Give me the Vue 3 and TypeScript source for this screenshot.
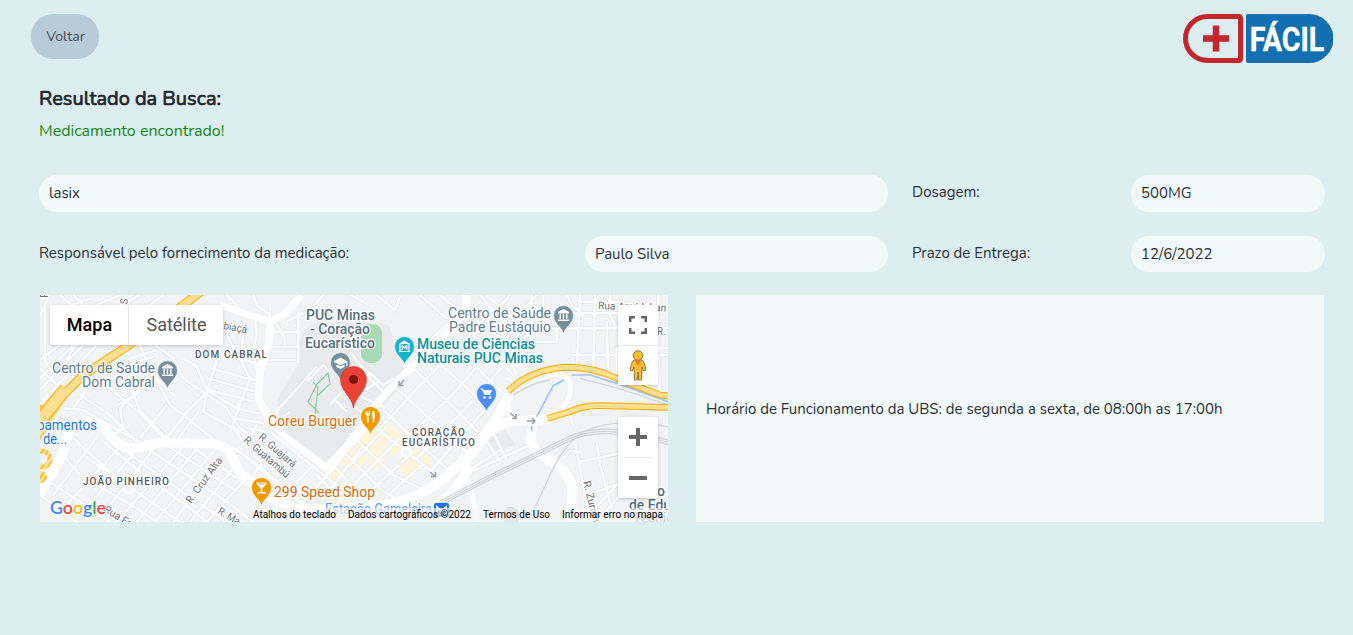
<script setup lang="ts">
interface MapLabel {
  t: string
  x: number
  y: number
  w: number
  kind: string
  rot?: number
}

interface Pin {
  x: number
  y: number
  color: string
  icon: string
}

const labels: MapLabel[] = [
  { t: 'F', x: 48, y: 298, w: 6, kind: 'street', rot: -90 },
  { t: 'S', x: 127, y: 305, w: 6, kind: 'street', rot: -80 },
  { t: 'biaçá', x: 223, y: 329, w: 24, kind: 'street', rot: 10 },
  { t: 'DOM CABRAL', x: 195, y: 358, w: 72, kind: 'area' },
  { t: 'JOÃO PINHEIRO', x: 83, y: 485, w: 86, kind: 'area' },
  { t: 'CORAÇÃO', x: 412, y: 436, w: 53, kind: 'area' },
  { t: 'EUCARÍSTICO', x: 402, y: 446, w: 73, kind: 'area' },
  { t: 'Centro de Saúde', x: 52, y: 373, w: 103, kind: 'slate' },
  { t: 'Dom Cabral', x: 82, y: 387, w: 73, kind: 'slate' },
  { t: 'Centro de Saúde', x: 448, y: 318, w: 103, kind: 'slate' },
  { t: 'Padre Eustáquio', x: 449, y: 332, w: 102, kind: 'slate' },
  { t: 'PUC Minas', x: 306, y: 320, w: 69, kind: 'slate strong' },
  { t: '- Coração', x: 310, y: 334, w: 60, kind: 'slate strong' },
  { t: 'Eucarístico', x: 305, y: 348, w: 70, kind: 'slate strong' },
  { t: 'Museu de Ciências', x: 417, y: 349, w: 118, kind: 'teal strong' },
  { t: 'Naturais PUC Minas', x: 417, y: 363, w: 126, kind: 'teal strong' },
  { t: 'Coreu Burguer', x: 268, y: 426, w: 89, kind: 'orange' },
  { t: '299 Speed Shop', x: 274, y: 497, w: 101, kind: 'orange' },
  { t: 'pamentos', x: 37, y: 430, w: 60, kind: 'blue' },
  { t: 'de...', x: 43, y: 444, w: 24, kind: 'blue' },
  { t: 'R. Cruz Alta', x: 191, y: 504, w: 54, kind: 'street', rot: -54 },
  { t: 'R. Guajará', x: 258, y: 438, w: 46, kind: 'street', rot: 41 },
  { t: 'R. Guatambú', x: 243, y: 441, w: 57, kind: 'street', rot: 41 },
  { t: 'Rua Fr', x: 103, y: 511, w: 30, kind: 'street', rot: 32 },
  { t: 'R. Ma', x: 217, y: 513, w: 24, kind: 'street', rot: 31 },
  { t: 'R. Zurich', x: 583, y: 482, w: 42, kind: 'street', rot: 76 },
  { t: 'Rua Aquidaban', x: 598, y: 309, w: 68, kind: 'street', rot: 2 },
  { t: 'R. H', x: 657, y: 335, w: 18, kind: 'street' },
  { t: 'Estação Gameleira', x: 325, y: 514, w: 107, kind: 'station' },
  { t: 'o', x: 657, y: 496, w: 8, kind: 'slate strong' },
  { t: 'de Edu', x: 629, y: 510, w: 42, kind: 'slate strong' },
  { t: 'Técnico', x: 633, y: 523, w: 48, kind: 'slate strong faint' },
]

const slate = '#78909c'
const pins: Pin[] = [
  { x: 167.5, y: 389, color: slate, icon: 'bank' },
  { x: 563.5, y: 334, color: slate, icon: 'bank' },
  { x: 340.5, y: 381, color: slate, icon: 'school' },
  { x: 404.5, y: 365, color: '#12b5cb', icon: 'museum' },
  { x: 486.5, y: 412, color: '#4c8df6', icon: 'cart' },
  { x: 370.5, y: 435, color: '#f29900', icon: 'food' },
  { x: 261.5, y: 506, color: '#f29900', icon: 'drink' },
]

/* Streets are drawn in two tiles, in thirds of a pixel. */
const westStreets = [
  'M0 60L30 0M15 40V200L45 245M0 285L130 150M0 250L110 140M0 195L60 150M0 325L170 150M60 230L105 150M60 0L95 30L150 10',
  'M100 0L130 30M170 30L240 0M240 30L300 0M330 30L370 0M0 220L70 290',
  'M300 150L320 200L390 330L430 360L510 285M345 150L400 190L430 250L560 340L600 400L640 430',
  'M430 190L470 215L500 285L590 340L600 315M270 190L350 165M245 218L340 185M225 235L310 210L345 240',
  'M150 270L100 340M75 340L130 345L260 420L300 440M120 300L210 360L290 440M300 280L240 340L250 400L210 425',
  'M190 265L290 345L380 440M270 275L300 345L370 420L420 450M380 330L300 430M440 355L370 440M475 350L405 445',
  'M430 360L530 440M490 350L580 400L610 440M345 240L300 290L235 330M310 210L400 300',
  'M490 150L530 200L500 290L490 350M550 90L575 150L600 190L630 250L570 410M612 80L605 170L660 185M645 60L650 120L640 160L650 230',
  'M515 220L620 250L650 255M505 250L645 290M500 283L640 320M570 180L660 210M560 150L605 155M590 340L655 355M580 370L670 385',
  'M575 390L620 430L600 470M650 390L625 435L590 462M620 400L690 410L850 540L930 600L990 650',
  'M560 445L640 500L760 600L840 660M600 470L740 590L800 640M820 510L730 600M780 480L700 580M720 430L640 540M870 530L790 620M920 560L850 640',
  'M40 600L175 420M70 640L235 460M130 650L290 465M190 655L350 450M230 681L430 455M290 681L480 450M345 681L520 470M400 681L545 490M450 681L580 520M500 681L610 560',
  'M60 470L120 540L290 640L350 681M130 480L260 570L420 681M190 440L300 530L450 640L500 681M260 470L440 600L560 681M320 460L560 620L640 681M380 450L590 590M450 450L590 550M0 600L110 681M30 560L210 681M100 430L220 540',
  'M695 112H780M695 155H775M690 195H760M775 50V205M705 80L735 130V150M740 80L775 60M850 0L805 50L770 60M690 30V70M640 0L650 30L690 60M560 0L590 30',
]
const eastStreets = [
  'M80 0L135 45L150 5M175 130L225 150L300 80M210 0L290 70L330 60M0 0L40 20M270 0L340 60',
  'M-40 240L0 290L110 340M30 210L100 270L130 250M0 170L60 250L110 300M45 285L85 260',
  'M60 385L170 470L265 545M100 345L180 420L300 530M140 280L310 435L370 490M190 220L330 355L390 420M240 180L420 340M290 130L455 290M330 80L490 240',
  'M0 415L130 540L230 590M-30 460L100 590L140 610M-60 500L30 600M-100 540L-20 620',
  'M90 400L230 250L330 150L430 40M160 440L310 295L440 150L520 50M200 490L370 315L480 190M240 530L400 350M0 510L110 395M20 560L160 420M60 590L190 470M110 605L220 505M-100 640L40 450M-50 640L20 560M310 520L350 450',
  'M390 0L440 60L510 110M480 0L430 60L370 120M560 0L480 90M350 40L400 100L460 130M410 0L500 80M510 110L470 170L500 240',
  'M545 0V80L535 190L545 210M580 0V50L605 70M620 100V145M650 0L665 30L700 60M690 0L680 225M735 0L730 225M770 80L775 230M780 0V60L800 100',
  'M530 100H810M525 140H620M665 180H960M640 55H820M685 20H810M925 0V160L930 300M800 230V160H960M900 100H960',
  'M470 250L490 260L500 290L560 255L600 245M655 350L670 390M580 340L660 360',
  'M676 450L690 520L720 681M740 440L750 510L790 660M640 490L660 468L690 470M690 500L810 475M700 605L810 565M735 640L810 560M810 600L740 681M640 681L670 560',
  'M340 560L365 530L540 450M405 430L450 500M430 415L470 495M335 540L375 515L450 465',
]

const westBlocks = 'M905 505L930 460L985 490L950 530ZM860 555L875 515L915 530L885 565ZM930 450L980 405L1010 430L970 475Z'
const eastBlocks = 'M15 450L55 395L115 430L90 485L55 460L30 480ZM55 500L75 460L110 490L75 525ZM100 375L155 415L130 445L85 395ZM180 460L245 490L235 520L180 488ZM150 510L185 490L215 520L190 545L140 525ZM105 455L130 440L155 465L130 485Z'

const rails = [0, 7, 14]
const credits = [
  { t: 'Atalhos do teclado', x: 253, w: 83 },
  { t: 'Dados cartográficos ©2022', x: 348, w: 123 },
  { t: 'Termos de Uso', x: 483, w: 67 },
  { t: 'Informar erro no mapa', x: 562, w: 101 },
]
const spin = (l: MapLabel) => (l.rot ? `rotate(${l.rot} ${l.x} ${l.y})` : undefined)
const fit = (l: MapLabel) => (l.kind === 'area' ? 'spacing' : 'spacingAndGlyphs')
</script>

<template>
  <div class="page">
    <header class="top">
      <button class="back" type="button">Voltar</button>
      <svg class="logo" width="150" height="49" viewBox="0 0 150 49" role="img" aria-label="+ Fácil">
        <path d="M24.500 2.500H56a1.500 1.500 0 0 1 1.500 1.500V45a1.500 1.500 0 0 1-1.500 1.500H24.500a22 22 0 0 1 0-44Z" fill="none" stroke="#c4262e" stroke-width="5" />
        <path d="M20 24.500H46M33 11.500V37.500" stroke="#c4262e" stroke-width="6.500" />
        <path d="M65 0H126a24.500 24.500 0 0 1 0 49H65a2 2 0 0 1-2-2V2a2 2 0 0 1 2-2Z" fill="#1270b0" />
        <text x="66.700" y="37" textLength="74.500" lengthAdjust="spacingAndGlyphs" class="logo-word">FÁCIL</text>
      </svg>
    </header>

    <main class="content">
      <h1 class="title">Resultado da Busca:</h1>
      <p class="found">Medicamento encontrado!</p>

      <div class="row first">
        <div class="field">lasix</div>
        <span class="label">Dosagem:</span>
        <div class="field">500MG</div>
      </div>
      <div class="row second">
        <span class="label">Responsável pelo fornecimento da medicação:</span>
        <div class="field">Paulo Silva</div>
        <span class="label">Prazo de Entrega:</span>
        <div class="field">12/6/2022</div>
      </div>

      <div class="panels">
        <section class="map">
          <svg class="canvas" width="628" height="227" viewBox="40 295 628 227">
            <defs>
              <pattern id="hatch" width="4.500" height="5" patternUnits="userSpaceOnUse" patternTransform="rotate(35)"><path d="M0 0H5V5H0Z" fill="#fde293" /><path d="M1 0V5" stroke="#f9ab00" stroke-width="1.200" /></pattern>
            </defs>
            <path d="M40 295H668V522H40Z" fill="#f1f3f4" />
            <path d="M300 342Q306 322 322 322H345L385 324Q392 326 393 340L408 380L326 463L276 425Q282 416 277 401Q288 380 297 367Z" fill="#e8eaed" />
            <path d="M487 438L505 430L516 445L497 452Z" fill="#e8eaed" />
            <g transform="translate(40 295) scale(0.33333)"><path :d="westBlocks" fill="#fef5d8" /></g>
            <g transform="translate(350 295) scale(0.33333)"><path :d="eastBlocks" fill="#fef5d8" /></g>

            <g class="edges" transform="translate(40 295) scale(0.33333)"><path v-for="d in westStreets" :key="d" :d="d" /></g>
            <g class="edges" transform="translate(350 295) scale(0.33333)"><path v-for="d in eastStreets" :key="d" :d="d" /></g>
            <g class="roads" transform="translate(40 295) scale(0.33333)">
              <path v-for="d in westStreets" :key="d" :d="d" />
              <path d="M540 30L640 65L690 78L730 60L785 0" class="w20" />
              <path d="M692 78L688 140L660 230L655 310L690 375L740 430L860 518L990 380" class="w22" />
              <path d="M-5 600L40 530L70 470L85 410Q110 370 150 378Q190 390 215 425Q245 470 300 457L350 443L520 445Q560 455 570 475L600 535L680 600L760 640L980 645" class="w26" />
              <path d="M700 360L830 215M800 260L850 210L880 240L850 300M870 330L910 285L950 340L990 375M880 310L920 350M690 395L750 350" class="thin" />
              <circle cx="268" cy="580" r="14" fill="#f1f3f4" />
            </g>
            <g class="roads" transform="translate(350 295) scale(0.33333)">
              <path v-for="d in eastStreets" :key="d" :d="d" />
              <path d="M-70 535L30 400L60 350L130 270L325 75Q350 50 350 -10" class="w22" />
              <path d="M-20 640L80 632Q200 615 270 560L360 480L430 385L478 300" class="w26" />
              <path d="M240 650L300 600L345 540L350 490L385 450Q430 382 500 378L600 372" class="w26" />
              <path d="M472 295Q465 360 520 385" class="w14" />
              <path d="M550 385L540 435L560 470L640 525L665 565V690" class="w26" />
              <path d="M590 240Q650 230 660 265Q668 310 630 345L560 380" class="w14" />
              <path d="M340 520Q370 600 385 690" class="w14" />
              <circle cx="168" cy="472" r="13" fill="#f1f3f4" />
            </g>

            <g transform="translate(350 295) scale(0.33333)" fill="none">
              <g stroke="#d3d6d9" stroke-width="4">
                <path v-for="r in rails" :key="r" :transform="`translate(0 ${r})`" d="M270 618L420 540L640 433Q700 400 770 402Q850 405 954 435" />
                <path d="M490 300Q540 265 600 255M690 250Q800 275 954 330" />
                <path d="M545 660L600 540Q640 450 700 410Q800 365 954 395" />
              </g>
              <path d="M545 408V392M560 365L610 272L642 255M665 240H720L800 265L960 322" stroke="#a1c2fa" stroke-width="5" />
            </g>
            <rect x="361" y="324" width="21" height="39" rx="9" fill="#a8dab5" />
            <path d="M328 373L317 384L308 402L319 413M313 382L318 388L315 415M328 373L330 384L317 396" fill="none" stroke="#81c995" stroke-width="1.100" />
            <path d="M40 405H62L40 440Z" fill="url(#hatch)" />
            <circle cx="42" cy="459" r="8" fill="none" stroke="url(#hatch)" stroke-width="5" />
            <circle cx="41" cy="477" r="6" fill="url(#hatch)" />
            <g transform="translate(40 295) scale(0.33333)" class="highway big">
              <path d="M490 -15L260 155L130 240L75 295L-10 400M72 278L20 340L-15 390" class="rim" />
              <path d="M490 -15L260 155L130 240L75 295L-10 400M72 278L20 340L-15 390" class="core" />
            </g>
            <g transform="translate(350 295) scale(0.33333)" class="highway">
              <path d="M475 288Q540 225 640 217Q720 213 800 250L930 300L970 304M592 370L660 350Q700 330 760 332L970 338" class="rim" />
              <path d="M475 288Q540 225 640 217Q720 213 800 250L930 300L970 304M592 370L660 350Q700 330 760 332L970 338" class="core" />
            </g>
            <g fill="none" stroke="#9aa0a6" stroke-width="1.500">
              <path d="M404 380L399.500 385M399 381V385.500H403.500" /><path d="M430 472L435 476M435.500 472V476.500H431" />
              <path d="M527 421H535M532 418L535 421L532 424" /><path d="M510 413L516 418M516 414V418.500H512" />
            </g>
            <circle cx="511" cy="516" r="9" fill="#c4c9cd" />
            <rect x="434" y="503" width="15" height="14" rx="2" fill="#1a73e8" />
            <path d="M437 513V507L441.500 511L446 507V513" fill="none" stroke="#fff" stroke-width="1.800" />
            <text v-for="(l, i) in labels" :key="`l${i}`" :x="l.x" :y="l.y" :textLength="l.w" :transform="spin(l)" :lengthAdjust="fit(l)" class="tag" :class="l.kind">{{ l.t }}</text>

            <g v-for="(p, i) in pins" :key="`p${i}`" :transform="`translate(${p.x} ${p.y})`">
              <path d="M0 0C-1.500-7-10-10-10-18.500a10 10 0 0 1 20 0C10-10 1.500-7 0 0Z" :fill="p.color" stroke="#fff" stroke-width="0.700" />
              <g v-if="p.icon === 'bank'" fill="#fff">
                <path d="M-5.500-20.500V-22L0-25L5.500-22V-20.500ZM-5.500-14.500H5.500V-13H-5.500ZM-4-20H-2.500V-15H-4ZM-.700-20H.700V-15H-.700ZM2.500-20H4V-15H2.500Z" />
              </g>
              <g v-else-if="p.icon === 'museum'" fill="none" stroke="#fff">
                <path d="M-5.800-21L0-24.500L5.800-21Z" fill="#fff" stroke="none" /><path d="M-4.500-21V-14M4.500-21V-14M-5.500-13.500H5.500" stroke-width="1.200" /><path d="M-2.300-15V-19.500L0-17L2.300-19.500V-15" stroke-width="1.200" />
              </g>
              <path v-else-if="p.icon === 'school'" d="M-7-19.500L0-23.500L7-19.500V-15H5.800V-18.500L0-15.500ZM-4-16.500L0-14.500L4-16.500V-14L0-12L-4-14Z" fill="#fff" />
              <g v-else-if="p.icon === 'cart'" fill="#fff">
                <path d="M-6-23H-4L-1.500-17.500H4" fill="none" stroke="#fff" stroke-width="1.200" /><path d="M-4-22H6L3.500-18H-2Z" /><circle cx="-2" cy="-14.500" r="1.200" /><circle cx="3.500" cy="-14.500" r="1.200" />
              </g>
              <g v-else-if="p.icon === 'food'" fill="none" stroke="#fff">
                <path d="M-4.500-24V-20M-2.700-24V-20M-.900-24V-20" stroke-width="1" /><path d="M-5-20.500H-.400M-2.700-20V-12.500M3-24V-12.500" stroke-width="1.700" /><path d="M2-24Q5-22 4-17H2Z" fill="#fff" stroke="none" />
              </g>
              <path v-else d="M-5-23.500H5V-22L.800-17.500V-14H4V-12.500H-4V-14H-.800V-17.500L-5-22ZM-2.500-21.500H2.500L3.500-22.500H-3.500Z" fill="#fff" fill-rule="evenodd" />
            </g>

            <path d="M353.500 408C352 397 340.500 391 340.500 379.500a13 13 0 0 1 26 0C366.500 391 355 397 353.500 408Z" fill="#ea4335" stroke="#c5362b" stroke-width="0.600" />
            <circle cx="353.500" cy="379.500" r="4.600" fill="#811411" />

            <text x="50" y="514" textLength="56" lengthAdjust="spacingAndGlyphs" class="google"><tspan fill="#4285f4">G</tspan><tspan fill="#ea4335">o</tspan><tspan fill="#fbbc04">o</tspan><tspan fill="#4285f4">g</tspan><tspan fill="#34a853">l</tspan><tspan fill="#ea4335">e</tspan></text>
            <path d="M249 508H668V522H249Z" fill="#f5f5f5" fill-opacity="0.650" />
            <text v-for="c in credits" :key="c.t" :x="c.x" y="518" :textLength="c.w" lengthAdjust="spacingAndGlyphs" class="credit">{{ c.t }}</text>
          </svg>

          <div class="types">
            <button type="button" class="type active">Mapa</button>
            <button type="button" class="type">Satélite</button>
          </div>
          <div class="tools">
            <button type="button" class="tool" aria-label="Tela cheia">
              <svg width="18" height="18" viewBox="0 0 18 18"><path d="M1.250 6V1.250H6M12 1.250H16.750V6M16.750 12V16.750H12M6 16.750H1.250V12" fill="none" stroke="#666" stroke-width="2.500" /></svg>
            </button>
            <button type="button" class="tool person" aria-label="Street View">
              <svg width="18" height="31" viewBox="0 0 18 31"><g fill="#fbbc2d" stroke="#7d7048" stroke-width="0.900"><path d="M5 10H13Q15 10.500 17 20L14.700 21L13 17L12.500 30H9.700L9 22L8.300 30H5.500L5 17L3.300 21L1 20Q3 10.500 5 10Z" /><circle cx="9" cy="5.500" r="4.800" /></g><path d="M5.500 10.300H12.500L9 16Z" fill="#e8792f" /></svg>
            </button>
          </div>
          <div class="zoomer">
            <button type="button" class="tool" aria-label="Aumentar zoom"><svg width="18" height="18"><path d="M0 9H18M9 0V18" stroke="#666" stroke-width="4" /></svg></button>
            <i class="rule"></i>
            <button type="button" class="tool" aria-label="Diminuir zoom"><svg width="18" height="18"><path d="M0 9H18" stroke="#666" stroke-width="4" /></svg></button>
          </div>
        </section>

        <section class="hours">Horário de Funcionamento da UBS: de segunda a sexta, de 08:00h as 17:00h</section>
      </div>
    </main>
  </div>
</template>

<style>
body {
  background: #ddeef1;
}
</style>

<style scoped>
.page {
  box-sizing: border-box;
  min-height: 635px;
  padding: 14px 20px 0 31px;
  background: #ddeef1;
  color: #2b3035;
  font: 15px/22px Nunito, Lato, sans-serif;
}
.top {
  display: flex;
  justify-content: space-between;
  height: 49px;
}
.back {
  width: 68px;
  height: 45px;
  padding: 0 0 0 1px;
  border: 0;
  border-radius: 22px;
  background: #b8cbd9;
  color: #454b50;
  font: 14.2px/22px Nunito, Lato, sans-serif;
}
.logo {
  display: block;
}
.logo-word {
  fill: #fff;
  stroke: #fff;
  stroke-width: 0.4px;
  font: 700 33px Roboto, sans-serif;
}
.content {
  padding: 24px 8px 0;
}
.title {
  margin: 0;
  color: #212529;
  font-size: 20px;
  font-weight: 400;
  line-height: 24px;
  -webkit-text-stroke: 0.7px #212529;
}
.found {
  margin: 8px 0 32px;
  color: #138613;
  font-size: 16px;
  line-height: 24px;
}
.row {
  display: grid;
  column-gap: 24px;
}
.row.first {
  grid-template-columns: 849px 195px 194px;
  height: 37px;
  margin-bottom: 24px;
}
.row.second {
  grid-template-columns: 522px 303px 195px 194px;
  height: 36px;
  margin-bottom: 23px;
}
.label {
  padding-top: 6px;
}
.field {
  display: flex;
  align-items: center;
  padding: 0 10px;
  border-radius: 18px;
  background: #f1faf9;
}
.first .field {
  padding-bottom: 1px;
}
.panels {
  display: grid;
  grid-template-columns: 628px 628px;
  column-gap: 28px;
  height: 227px;
  margin-left: 1px;
}
.hours {
  display: flex;
  align-items: center;
  padding: 0 10px;
  background: #f1faf9;
}
.map {
  position: relative;
  overflow: hidden;
}
.canvas {
  display: block;
}
.edges {
  fill: none;
  stroke: #dee1e4;
  stroke-width: 11;
}
.roads {
  fill: none;
  stroke: #fff;
  stroke-width: 7.5;
  stroke-linejoin: round;
}
.w14 {
  stroke-width: 14;
}
.w20 {
  stroke-width: 20;
}
.w22 {
  stroke-width: 22;
}
.w26 {
  stroke-width: 28;
}
.thin {
  stroke-width: 5;
}
.highway {
  fill: none;
}
.rim {
  stroke: #f9ab00;
  stroke-width: 20;
}
.core {
  stroke: #fddf8f;
  stroke-width: 14;
}
.big .rim {
  stroke-width: 27;
}
.big .core {
  stroke-width: 21;
}
.tag {
  font: 14.2px Roboto, sans-serif;
  paint-order: stroke;
  stroke: #fff;
  stroke-width: 2.4px;
  stroke-linejoin: round;
}
.tag.strong {
  font-weight: 500;
}
.tag.street {
  fill: #6b7075;
  font-size: 10.5px;
}
.tag.area {
  fill: #55595e;
  font-size: 10px;
  font-weight: 500;
}
.tag.slate {
  fill: #607d8b;
}
.tag.slate.strong {
  fill: #546e7a;
}
.tag.faint {
  opacity: 0.6;
}
.tag.teal {
  fill: #0c8f96;
}
.tag.orange {
  fill: #d56e0c;
}
.tag.blue {
  fill: #1a73e8;
}
.tag.station {
  fill: #5c9af5;
}
.google {
  font: 600 18px Lato, sans-serif;
  paint-order: stroke;
  stroke: #fff;
  stroke-width: 1.4px;
}
.credit {
  fill: #000;
  font: 10px Roboto, sans-serif;
}
.types,
.tools,
.zoomer {
  position: absolute;
  background: #fff;
  box-shadow: 0 1px 4px -1px rgba(0, 0, 0, 0.3);
}
.types {
  top: 10px;
  left: 10px;
  display: flex;
  height: 40px;
  border-radius: 2px;
}
.type {
  width: 94px;
  padding: 0;
  border: 0;
  background: none;
  color: #565656;
  font: 18px Roboto, sans-serif;
}
.type.active {
  width: 79px;
  padding: 0 0 2px 1px;
  border-right: 1px solid #e6e6e6;
  color: #000;
  font-weight: 500;
}
.type:last-child {
  padding: 0 0 2px 1px;
}
.tools {
  top: 10px;
  right: 10px;
  width: 40px;
  height: 80px;
}
.zoomer {
  top: 122px;
  right: 10px;
  width: 40px;
  height: 81px;
  border-radius: 2px;
}
.tool {
  display: flex;
  align-items: center;
  justify-content: center;
  width: 40px;
  height: 40px;
  padding: 0;
  border: 0;
  background: none;
}
.tool.person {
  height: 39px;
  border-top: 1px solid #e6e6e6;
}
.rule {
  display: block;
  height: 1px;
  margin: 0 5px;
  background: #e6e6e6;
}
</style>
